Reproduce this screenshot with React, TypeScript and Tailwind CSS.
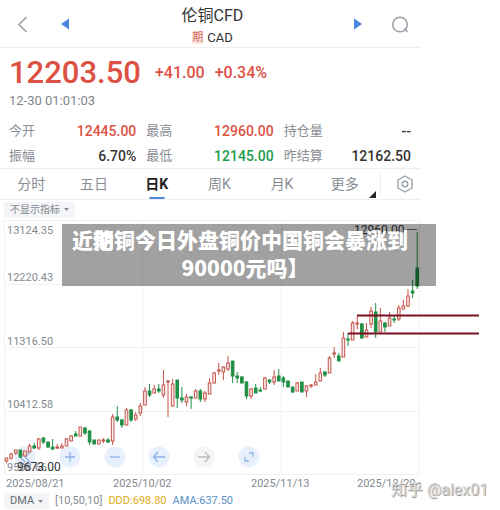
import { clsx } from "clsx";

const UP = "#c4534a";
const DOWN = "#1f8f45";

// [high, open/close top, open/close bottom, low, rising]
const candles: number[][] = [
  [458,458,461,463,1],[453,454,458,460,1],[450,450,453,455,1],[450,450,457,458,0],[451,451,456,456,1],
  [444,446,452,452,1],[443,446,448,449,0],[438,439,448,450,1],[437,438,442,444,0],[442,442,447,448,0],
  [439,447,449,450,0],[444,447,448,449,1],[443,446,448,448,1],[438,439,446,446,1],[435,436,441,441,1],
  [431,434,436,436,0],[427,427,436,436,1],[427,428,433,435,0],[430,431,442,445,0],[440,440,444,444,0],
  [440,440,444,444,1],[438,440,441,443,1],[438,440,442,443,0],[414,417,441,445,1],[406,417,420,422,0],
  [419,420,425,428,0],[408,410,425,425,1],[409,410,420,422,0],[412,415,419,421,1],[403,406,413,416,1],
  [387,391,405,405,1],[384,391,395,397,0],[385,389,393,393,1],[384,389,391,393,0],[370,385,395,398,1],
  [380,381,382,417,1],[379,384,406,406,1],[380,380,398,408,0],[387,398,400,403,0],[394,397,402,406,1],
  [396,397,398,409,0],[389,391,398,398,1],[389,391,399,402,0],[391,393,399,402,1],[378,383,394,394,1],
  [372,373,383,383,1],[363,370,371,375,1],[366,367,372,380,1],[356,363,369,371,1],[361,361,376,383,0],
  [372,376,378,383,0],[376,377,383,383,0],[381,382,396,399,0],[388,389,396,399,1],[384,388,393,393,0],
  [387,390,391,392,0],[377,378,389,389,1],[379,380,382,384,0],[370,377,382,385,1],[369,376,381,381,0],
  [376,378,382,387,0],[381,381,387,387,0],[387,387,392,393,0],[382,383,391,391,1],[382,382,392,392,0],
  [385,386,391,397,1],[384,385,386,388,1],[374,382,385,385,1],[368,373,381,381,1],[371,372,375,377,0],
  [356,358,373,373,1],[347,353,354,358,1],[353,356,361,361,0],[332,338,357,357,1],[333,339,340,346,0],
  [321,323,340,340,1],[316,323,324,329,1],[323,324,338,339,0],[323,330,337,337,1],[307,311,324,328,1],
  [303,312,332,338,0],[308,321,332,332,1],[322,323,327,332,0],[312,318,326,326,1],[316,319,320,323,0],
  [305,308,319,321,1],[300,306,309,309,1],[289,296,306,307,1],[280,291,293,298,0],[232,268,286,289,0],
];

const tabs = ["分时", "五日", "日K", "周K", "月K"];

const stats = [
  { label: "今开", value: "12445.00", color: "text-[#dd5144]" },
  { label: "最高", value: "12960.00", color: "text-[#dd5144]" },
  { label: "持仓量", value: "--", color: "text-[#333333]" },
  { label: "振幅", value: "6.70%", color: "text-[#333333]" },
  { label: "最低", value: "12145.00", color: "text-[#1d9d4c]" },
  { label: "昨结算", value: "12162.50", color: "text-[#333333]" },
];

function Header() {
  return (
    <header className="flex h-12 items-center justify-between border-b border-[#eeeeee] pr-[11px] pl-4">
      <div className="flex w-24 items-center gap-6">
        <button aria-label="返回">
          <svg width="20" height="20" viewBox="0 0 20 20" fill="none" stroke="#999fa6" strokeWidth="1.6">
            <path d="M10.500 3 L3 10.500 L10.500 18" />
          </svg>
        </button>
        <button aria-label="上一个">
          <svg width="10" height="12" viewBox="0 0 10 12" fill="#4a86dc">
            <path d="M9 0.500 V11.500 L1 6 Z" />
          </svg>
        </button>
      </div>
      <div className="flex flex-col items-center pt-1">
        <h1 className="text-base leading-6 text-[#333333]">伦铜CFD</h1>
        <div className="flex items-center gap-1 leading-5 text-[#333333]">
          <span className="bg-[#fbe6e3] text-[11px] leading-3 text-[#d9675c]">期</span>
          <span className="text-[13px]">CAD</span>
        </div>
      </div>
      <div className="flex w-24 items-center justify-end gap-7">
        <button aria-label="下一个">
          <svg width="10" height="12" viewBox="0 0 10 12" fill="#4a86dc">
            <path d="M1 0.500 V11.500 L9 6 Z" />
          </svg>
        </button>
        <button aria-label="搜索">
          <svg width="18" height="18" viewBox="0 0 18 18" fill="none" stroke="#999fa6" strokeWidth="1.500">
            <circle cx="9" cy="9.500" r="7.300" />
            <path d="M13 13.500 L16.500 17" />
          </svg>
        </button>
      </div>
    </header>
  );
}

function Quote() {
  return (
    <section className="border-b border-[#eeeeee] px-[9px] pt-[7px]">
      <div className="flex items-center gap-[14px] font-medium text-[#dd5144]">
        <span className="text-[31px] leading-9">12203.50</span>
        <span className="flex gap-[10px] text-base">
          <span>+41.00</span>
          <span>+0.34%</span>
        </span>
      </div>
      <div className="text-[13px] leading-5 text-[#7f858c]">12-30 01:01:03</div>
      <dl className="mt-[7px] grid grid-cols-[127fr_127fr_127fr] gap-x-[10px]">
        {stats.map((s) => (
          <div key={s.label} className="flex h-[25px] items-center justify-between">
            <dt className="text-[13px] text-[#888d94]">{s.label}</dt>
            <dd className={clsx("text-sm font-medium", s.color)}>{s.value}</dd>
          </div>
        ))}
      </dl>
    </section>
  );
}

function Tabs() {
  return (
    <nav className="flex h-[31px] items-stretch border-b border-[#eeeeee] text-sm text-[#888d94]">
      {tabs.map((t) => (
        <button
          key={t}
          className={clsx("relative flex-1", t === "日K" && "font-bold text-[#222222]")}
        >
          {t}
          {t === "日K" && (
            <span className="absolute bottom-0 left-1/2 h-[2px] w-[15px] -translate-x-1/2 bg-[#4a86dc]"></span>
          )}
        </button>
      ))}
      <button className="relative flex-1">
        更多
        <svg className="absolute right-0 bottom-px" width="7" height="7" viewBox="0 0 7 7">
          <path d="M7 0 V7 H0 Z" fill="#222" />
        </svg>
      </button>
      <button aria-label="设置" className="my-1 ml-1 flex w-10 items-center justify-center border-l border-[#eeeeee] pl-2">
        <svg width="18" height="18" viewBox="0 0 18 18" fill="none" stroke="#999fa6" strokeWidth="1.400">
          <path d="M9 1 L16 5 V13 L9 17 L2 13 V5 Z" strokeLinejoin="round" />
          <circle cx="9" cy="9" r="2.800" />
        </svg>
      </button>
    </nav>
  );
}

function ChartButton({ x, muted, d }: { x: number; muted?: boolean; d: string }) {
  return (
    <g transform={`translate(${x} 457)`}>
      <circle r="10.500" fill={muted ? "#f3f3f5" : "#e3edfb"} fillOpacity="0.850" />
      <path d={d} fill="none" stroke={muted ? "#b9bcc2" : "#8db1e6"} strokeWidth="1.300" />
    </g>
  );
}

function Chart() {
  return (
    <svg viewBox="0 219 500 257" className="block w-full">
      <g stroke="#f1f1f3" strokeWidth="1">
        {[220.5, 284.5, 347.5, 411.5, 474.5].map((y) => (
          <path key={y} d={`M4 ${y} H420`} />
        ))}
        {[4.5, 142.5, 281.5, 419.5].map((x) => (
          <path key={x} d={`M${x} 220 V475`} />
        ))}
      </g>
      <ChartButton x={25} d="M0 -5 L-5 0 L0 5 M5 -5 L0 0 L5 5" />
      <ChartButton x={70} d="M-5 0 H5 M0 -5 V5" />
      <ChartButton x={115} d="M-5 0 H5" />
      <ChartButton x={159} d="M6 0 H-5 M-1 -5 L-5.500 0 L-1 5" />
      <ChartButton x={204} muted d="M-6 0 H5 M1 -5 L5.500 0 L1 5" />
      <ChartButton x={249} d="M0 -4 H4 V0 M-4 0 V4 H0" />
      {candles.map(([high, top, bottom, low, rising], i) => {
        const x = 6.5 + i * 4.615;
        const color = rising ? UP : DOWN;
        return (
          <g key={i} stroke={color} strokeWidth="1">
            <path d={`M${x} ${high} V${top} M${x} ${bottom} V${low}`} />
            <rect
              x={x - 1.3}
              y={top}
              width="2.600"
              height={Math.max(bottom - top, 0.5)}
              fill={rising ? "#fbeeec" : color}
            />
          </g>
        );
      })}
      <g fontSize="11" fill="#858a90">
        <text x="7" y="234">13124.35</text>
        <text x="7" y="281">12220.43</text>
        <text x="7" y="345">11316.50</text>
        <text x="7" y="408">10412.58</text>
        <text x="7" y="471">9508.66</text>
      </g>
      <text x="17" y="471" fontSize="12" fill="#333">9673.00</text>
      <text x="354" y="234" fontSize="12" fill="#333">12960.00</text>
      <path d="M407 229.500 H417" stroke="#777" />
      <path d="M357 315.500 H479 M348 333.500 H479" stroke="#7b1024" strokeWidth="2" />
    </svg>
  );
}

export default function App() {
  return (
    <main className="relative w-full overflow-hidden bg-white font-[Roboto,'Noto_Sans_CJK_SC',sans-serif]">
      <div className="w-[84%]">
        <Header />
        <Quote />
        <Tabs />
        <div className="flex h-[19px] items-center pl-1">
          <button className="flex h-4 items-center gap-1 bg-[#f4f5f8] px-[6px] text-[10px] text-[#7f858c]">
            不显示指标
            <svg width="5" height="3" viewBox="0 0 5 3">
              <path d="M0 0 H5 L2.500 3 Z" fill="#888d94" />
            </svg>
          </button>
        </div>
      </div>
      <div className="relative">
        <Chart />
        <h2 className="absolute top-[5px] right-16 left-[62px] flex h-[62px] flex-col items-center bg-black/37 pt-px font-['Noto_Sans_CJK_SC',sans-serif] text-[21px] leading-7 font-black text-white">
          <span className="flex pr-[18px] whitespace-nowrap">
            近
            <span className="grid">
              <span className="col-start-1 row-start-1">期</span>
              <span className="col-start-1 row-start-1">伦</span>
            </span>
            铜今日外盘铜价中国铜会暴涨到
          </span>
          <span className="pr-2">90000元吗】</span>
        </h2>
      </div>
      <div className="grid w-[84%] grid-cols-[107fr_138fr_106fr_63fr] pl-[6px] text-[11px] leading-4 text-[#858a90]">
        <span>2025/08/21</span>
        <span>2025/10/02</span>
        <span>2025/11/13</span>
        <span>2025/12/20</span>
      </div>
      <div className="flex h-[18px] items-center gap-[6px] pl-1 text-[11px] text-[#888d94]">
        <button className="flex h-4 items-center gap-1 bg-[#f4f5f8] px-[6px] text-[#666b72]">
          DMA
          <svg width="5" height="3" viewBox="0 0 5 3">
            <path d="M0 0 H5 L2.500 3 Z" fill="#888d94" />
          </svg>
        </button>
        <span>[10,50,10]</span>
        <span className="text-[#e0ac1c]">DDD:698.80</span>
        <span className="text-[#5a8fc4]">AMA:637.50</span>
      </div>
      <div className="absolute right-3 bottom-2 text-base text-[#dddddd] [text-shadow:1px_1px_1px_#888888]">
        知乎 @alex01
      </div>
    </main>
  );
}
